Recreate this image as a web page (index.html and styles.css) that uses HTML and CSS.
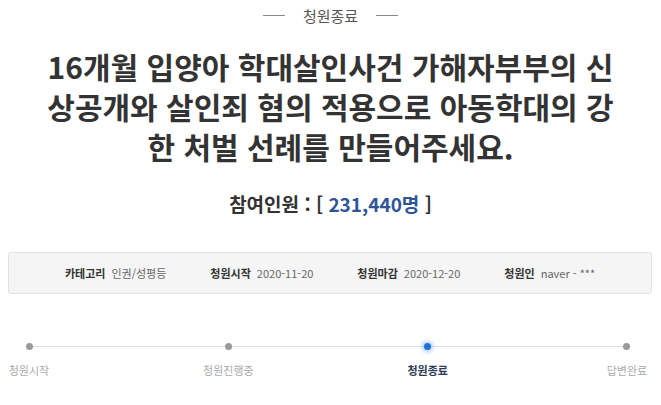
FILE: index.html
```html
<!DOCTYPE html>
<html lang="ko">
  <head>
    <meta charset="UTF-8" />
    <meta name="viewport" content="width=device-width, initial-scale=1.0" />
    <title>청원종료</title>
    <link rel="stylesheet" href="styles.css">
  </head>
  <body>
    <div class="status">
      <span class="dash"></span>
      <span class="status-text">청원종료</span>
      <span class="dash"></span>
    </div>

    <h1 class="title">
      16개월 입양아 학대살인사건 가해자부부의 신<br />
      상공개와 살인죄 혐의 적용으로 아동학대의 강<br />
      한 처벌 선례를 만들어주세요.
    </h1>

    <p class="count">참여인원 : [ <span class="num">231,440명</span> ]</p>

    <div class="info">
      <div class="info-item"><b>카테고리</b><span>인권/성평등</span></div>
      <div class="info-item"><b>청원시작</b><span>2020-11-20</span></div>
      <div class="info-item"><b>청원마감</b><span>2020-12-20</span></div>
      <div class="info-item"><b>청원인</b><span>naver - ***</span></div>
    </div>

    <div class="timeline">
      <div class="step"><i class="dot"></i><span>청원시작</span></div>
      <div class="step"><i class="dot"></i><span>청원진행중</span></div>
      <div class="step active"><i class="dot"></i><span>청원종료</span></div>
      <div class="step"><i class="dot"></i><span>답변완료</span></div>
    </div>
  </body>
</html>
```

FILE: styles.css
```css
body {
  font-family: "Noto Sans CJK KR", "Noto Sans", sans-serif;
  margin: 0;
  padding: 0;
  background-color: #fff;
  color: #333;
}
.status {
  display: flex;
  justify-content: center;
  align-items: center;
  gap: 18px;
  padding-top: 5px;
  height: 21px;
}
.dash {
  width: 22px;
  height: 1px;
  background-color: #888;
}
.status-text {
  font-size: 15px;
  color: #555;
  line-height: 21px;
}
.title {
  margin: 20px 0 0;
  text-align: center;
  font-size: 30px;
  line-height: 40px;
  font-weight: bold;
  color: #333;
}
.count {
  margin: 26px 0 0;
  text-align: center;
  font-size: 19px;
  line-height: 24px;
  font-weight: bold;
  color: #333;
}
.count .num {
  color: #2d5597;
}
.info {
  margin: 36px 9px 0 8px;
  height: 40px;
  border: 1px solid #e2e2e2;
  border-radius: 3px;
  background-color: #f5f5f5;
  display: flex;
  justify-content: center;
  align-items: center;
  gap: 44px;
  font-size: 11px;
}
.info-item b {
  color: #333;
  margin-right: 6px;
}
.info-item span {
  color: #666;
}
.timeline {
  position: relative;
  margin: 49px 5px 0 0;
  display: flex;
  justify-content: space-between;
}
.timeline::before {
  content: "";
  position: absolute;
  left: 29px;
  right: 29px;
  top: 3px;
  height: 1px;
  background-color: #e0e0e0;
}
.step {
  position: relative;
  width: 58px;
  display: flex;
  flex-direction: column;
  align-items: center;
  gap: 12px;
  font-size: 11px;
  color: #aaa;
}
.dot {
  width: 7px;
  height: 7px;
  border-radius: 50%;
  background-color: #999;
}
.step.active {
  color: #2b3a55;
  font-weight: bold;
}
.step.active .dot {
  background-color: #1f6fdb;
  box-shadow: 0 0 4px 2px rgba(31, 111, 219, 0.35);
}
```
